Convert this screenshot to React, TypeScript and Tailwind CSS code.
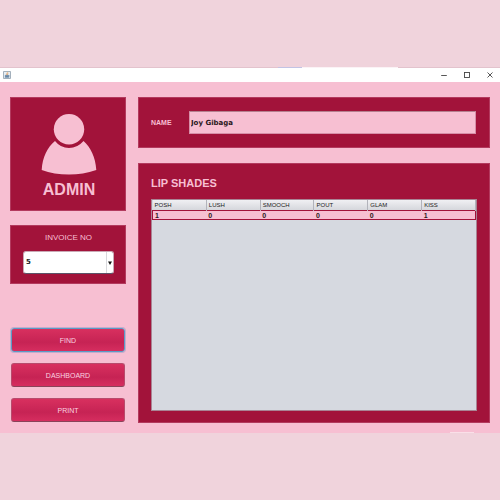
import type { ReactNode } from "react";

const shades = [
  { name: "POSH", count: 1 },
  { name: "LUSH", count: 0 },
  { name: "SMOOCH", count: 0 },
  { name: "POUT", count: 0 },
  { name: "GLAM", count: 0 },
  { name: "KISS", count: 1 },
];

function Panel({ className = "", children }: { className?: string; children: ReactNode }) {
  return (
    <section className={`border border-[#b33a5e] bg-[#a2133a] text-[#f7bfd2] ${className}`}>
      {children}
    </section>
  );
}

function TitleBar() {
  return (
    <header className="bg-white text-[#444]">
      <div className="flex h-px">
        <span className="grow-[278] basis-0 bg-[#e3c3cd]" />
        <span className="grow-[24] basis-0 bg-[#c3c3e4]" />
        <span className="grow-[96] basis-0 bg-[#fbf3f6]" />
        <span className="grow-[102] basis-0 bg-[#e3c3cd]" />
      </div>
      <div className="flex h-[14px] items-center justify-between pr-1.5 pl-[3px]">
        <svg viewBox="0 0 16 16" className="size-2" aria-hidden="true">
          <rect x="0.8" y="0.8" width="14.4" height="14.4" rx="1" fill="#e6eef4" stroke="#8496a5" strokeWidth="1.6" />
          <path d="M8.6 2.5c1.4 1.8-2.6 2.8-.9 5.3M10.5 4.6c-2 1-1.6 2-1 3.2" fill="none" stroke="#e8954a" strokeWidth="1.6" />
          <path d="M4.5 8.6h6.5v3.2H4.5zM3.5 13.2h9" fill="#6c8caa" stroke="#5f7f9d" strokeWidth="1.2" />
          <path d="M11 9.2h1.6v1.6H11" fill="none" stroke="#5f7f9d" />
        </svg>
        <div className="flex items-center gap-[15px]">
          <button type="button" aria-label="Minimize" className="flex size-2 items-center justify-center">
            <svg viewBox="0 0 8 8" className="size-2"><path d="M1.200 4.500h5.600" stroke="currentColor" strokeWidth="0.9" /></svg>
          </button>
          <button type="button" aria-label="Maximize" className="flex size-2 items-center justify-center">
            <svg viewBox="0 0 8 8" className="size-2"><rect x="1.5" y="1.5" width="5" height="5" fill="none" stroke="currentColor" strokeWidth="0.9" /></svg>
          </button>
          <button type="button" aria-label="Close" className="flex size-2 items-center justify-center">
            <svg viewBox="0 0 8 8" className="size-2"><path d="M1.5 1.5l5 5M6.5 1.5l-5 5" stroke="currentColor" strokeWidth="0.9" /></svg>
          </button>
        </div>
      </div>
    </header>
  );
}

function ActionButton({ label, active = false }: { label: string; active?: boolean }) {
  const edge = active ? "border-[#5b9bc6] ring-1 ring-[#c4abcb]" : "border-[#b84a6c] border-b-[#8a4259]";
  return (
    <button
      type="button"
      className={`h-6 w-full rounded-[3px] border bg-linear-to-b from-[#d8305f] via-[#c62354] via-60% to-[#d62d5f] text-[7px] leading-none text-[#fbd3e0] ${edge}`}
    >
      {label}
    </button>
  );
}

export default function App() {
  return (
    <div className="flex min-h-screen flex-col justify-center bg-[#f0d3dc] font-['Liberation_Sans',Arial,sans-serif]">
      <div className="bg-[#f7bfd2]">
        <TitleBar />
        <main className="flex gap-3 px-[10px] pt-[15px] pb-[9px]">
          <aside className="flex w-[116px] shrink-0 flex-col">
            <Panel className="flex h-[114px] flex-col items-center pt-4 pl-0.5">
              <svg viewBox="0 0 56 62" className="h-[62px] w-14" fill="#f7bfd2" aria-hidden="true">
                <circle cx="28" cy="15.3" r="15.2" />
                <path d="M14 27Q19.500 34 28 34Q36.500 34 42.500 27C49.500 33 54.500 43 55.300 56Q42 60.600 28 60.600Q13 60.600 .7 56C1.500 43 6.500 33 14 27Z" />
              </svg>
              <h1 className="mt-1.5 text-[16px] leading-4 font-bold">ADMIN</h1>
            </Panel>
            <Panel className="mt-[14px] flex h-[59px] flex-col pt-2 pr-[11px] pl-3">
              <label htmlFor="invoice" className="text-center text-[8px] leading-2">
                INVOICE NO
              </label>
              <div className="relative mt-[9px]">
                <select
                  id="invoice"
                  className="block h-[23px] w-full appearance-none rounded-[3px] border border-[#c9a9b5] border-b-[#5c5468] bg-white px-[2px] font-['DejaVu_Sans',Verdana,sans-serif] text-[7px] font-bold text-[#222]"
                >
                  <option>5</option>
                </select>
                <span className="pointer-events-none absolute inset-y-px right-px flex w-[7px] items-center justify-center border-l border-[#d8d8dc]">
                  <svg viewBox="0 0 4 4" className="size-1" aria-hidden="true"><path d="M0 .5h4L2 4z" fill="#111" /></svg>
                </span>
              </div>
            </Panel>
            <div className="mt-11 flex flex-col gap-[11px] px-px pb-px">
              <ActionButton label="FIND" active />
              <ActionButton label="DASHBOARD" />
              <ActionButton label="PRINT" />
            </div>
          </aside>

          <div className="flex min-w-0 flex-1 flex-col gap-[15px]">
            <Panel className="flex h-[51px] items-center pr-[13px] pl-3">
              <label htmlFor="name" className="w-[38px] shrink-0 text-[7px] leading-2 font-bold">
                NAME
              </label>
              <input
                id="name"
                defaultValue="Joy Gibaga"
                className="h-[23px] min-w-0 flex-1 border border-[#d78fa8] border-t-[#b5808f] bg-[#f7bfd2] px-px font-['DejaVu_Sans',Verdana,sans-serif] text-[7px] font-bold text-[#2b1820]"
              />
            </Panel>
            <Panel className="flex flex-1 flex-col px-3 pt-[13px] pb-[11px]">
              <h2 className="text-[11px] leading-3 font-bold">LIP SHADES</h2>
              <div className="mt-[10px] flex-1 border border-[#a98494] bg-[#d6d9e0]">
                <table className="w-full table-fixed border-collapse text-left">
                  <thead>
                    <tr className="h-[10px] bg-linear-to-b from-[#f0f0f3] to-[#d3d4da]">
                      {shades.map((shade) => (
                        <th
                          key={shade.name}
                          scope="col"
                          className="border-r border-[#b2b3bb] p-0 pl-[2px] text-[6px] leading-[10px] font-normal text-[#222]"
                        >
                          {shade.name}
                        </th>
                      ))}
                    </tr>
                  </thead>
                  <tbody>
                    <tr className="h-[9px] border border-[#a2133a] bg-[#f7bfd2]">
                      {shades.map((shade) => (
                        <td key={shade.name} className="p-0 pl-[2px] text-[7px] leading-[7px] font-bold text-[#2b1820]">
                          {shade.count}
                        </td>
                      ))}
                    </tr>
                  </tbody>
                </table>
              </div>
            </Panel>
          </div>
        </main>
        <div className="flex h-px">
          <span className="grow-[450] basis-0" />
          <span className="grow-[24] basis-0 bg-[#fadfe8]" />
          <span className="grow-[26] basis-0" />
        </div>
      </div>
    </div>
  );
}
